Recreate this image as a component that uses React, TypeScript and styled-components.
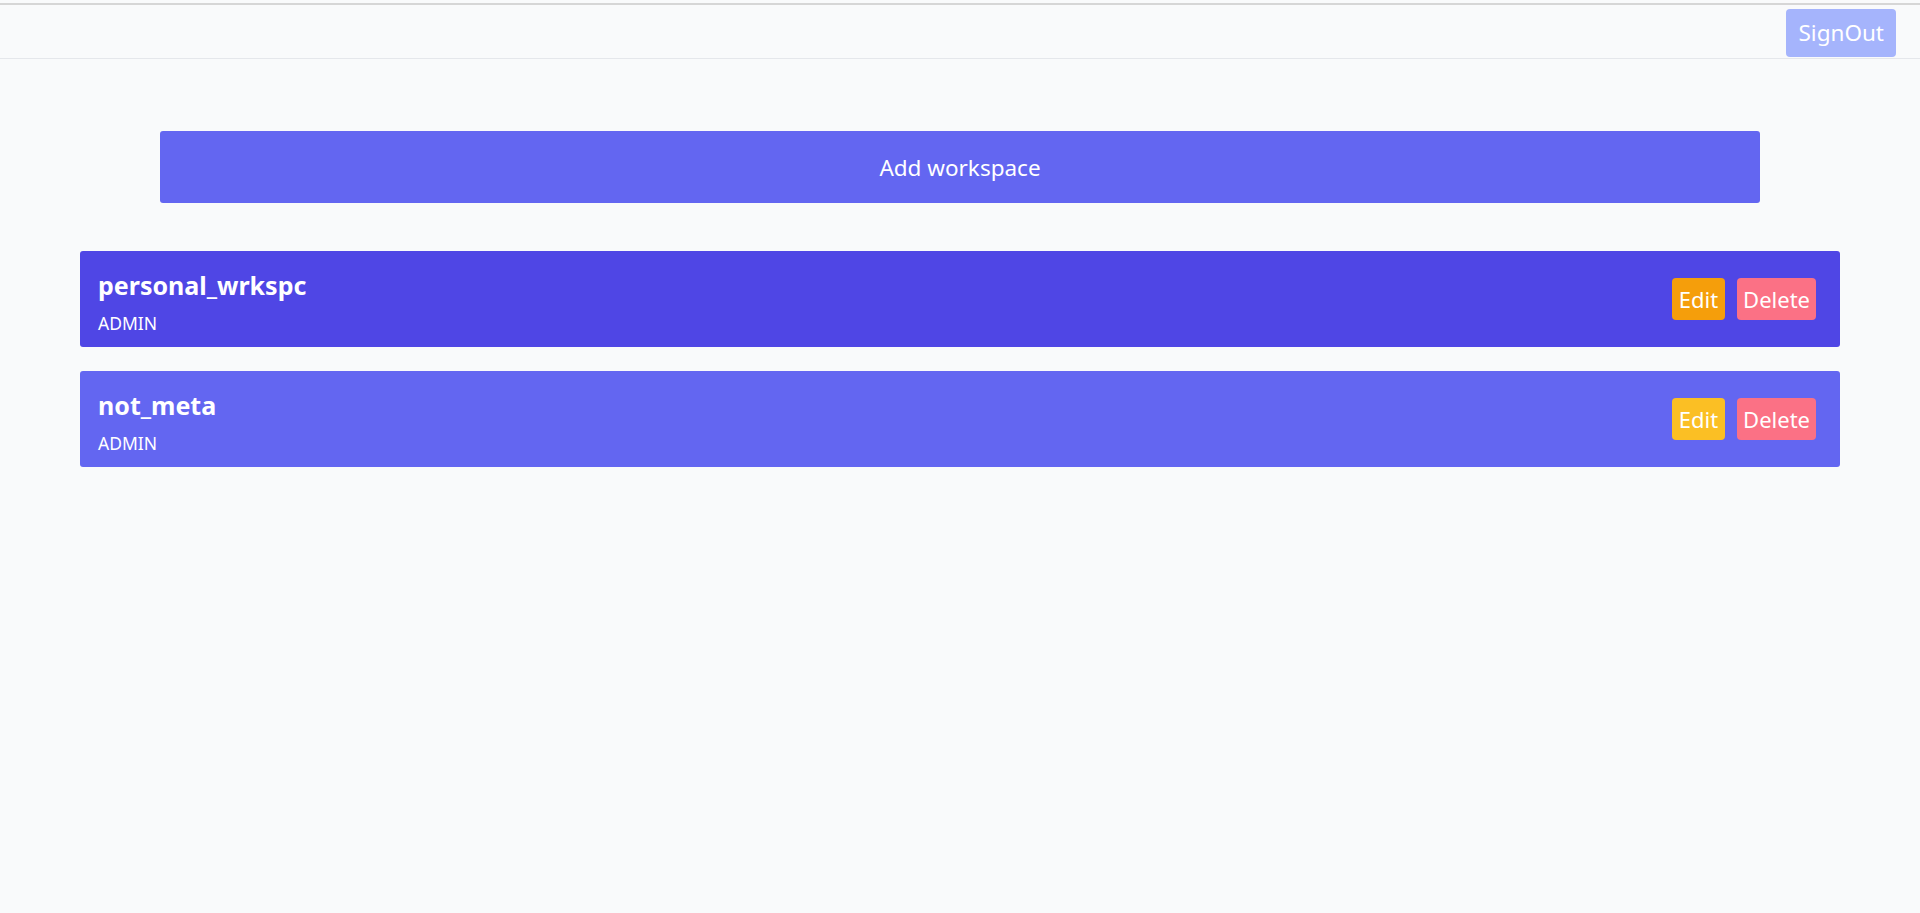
import styled, { createGlobalStyle } from 'styled-components';

interface Workspace {
  name: string;
  role: string;
}

const workspaces: Workspace[] = [
  { name: 'personal_wrkspc', role: 'ADMIN' },
  { name: 'not_meta', role: 'ADMIN' },
];

export default function App() {
  return (
    <>
      <GlobalStyle />
      <Page>
        <Header>
          <SignOutButton>SignOut</SignOutButton>
        </Header>

        <Main>
          <AddButton>Add workspace</AddButton>

          <WorkspaceList>
            {workspaces.map((ws, i) => (
              <WorkspaceCard key={ws.name} $active={i === 0}>
                <WorkspaceInfo>
                  <WorkspaceName>{ws.name}</WorkspaceName>
                  <WorkspaceRole>{ws.role}</WorkspaceRole>
                </WorkspaceInfo>
                <Actions>
                  <EditButton $active={i === 0}>Edit</EditButton>
                  <DeleteButton>Delete</DeleteButton>
                </Actions>
              </WorkspaceCard>
            ))}
          </WorkspaceList>
        </Main>
      </Page>
    </>
  );
}

const GlobalStyle = createGlobalStyle`
  html, body {
    margin: 0;
    padding: 0;
    background: #f9fafb;
    font-family: 'Noto Sans', 'Open Sans', sans-serif;
  }
  * {
    box-sizing: border-box;
  }
`;

const Page = styled.div`
  min-height: 913px;
  padding-top: 3px;
  background: #f9fafb;
`;

const Header = styled.header`
  display: flex;
  justify-content: flex-end;
  align-items: center;
  height: 56px;
  padding: 3px 24px 1px;
  border-top: 2px solid #d6d6d6;
  border-bottom: 1px solid #e5e7eb;
`;

const BaseButton = styled.button`
  border: none;
  color: #fff;
  font-family: inherit;
  cursor: pointer;
  border-radius: 4px;
`;

const SignOutButton = styled(BaseButton)`
  height: 48px;
  padding: 0 12px;
  font-size: 22.5px;
  background: #a5b4fc;
`;

const Main = styled.main`
  display: flex;
  flex-direction: column;
  padding: 72px 80px;
`;

const AddButton = styled(BaseButton)`
  margin: 0 80px;
  height: 72px;
  font-size: 22.5px;
  background: #6366f1;
  border-radius: 3px;
`;

const WorkspaceList = styled.div`
  display: flex;
  flex-direction: column;
  gap: 24px;
  margin-top: 48px;
`;

const WorkspaceCard = styled.div<{ $active: boolean }>`
  display: flex;
  align-items: flex-start;
  justify-content: space-between;
  height: 96px;
  padding: 18px 24px 0 18px;
  border-radius: 3px;
  background: ${({ $active }) => ($active ? '#4f46e5' : '#6366f1')};
  color: #fff;
`;

const WorkspaceInfo = styled.div`
  display: flex;
  flex-direction: column;
  gap: 10px;
`;

const WorkspaceName = styled.div`
  font-size: 25px;
  font-weight: 700;
  line-height: 32px;
`;

const WorkspaceRole = styled.div`
  font-size: 17.5px;
  line-height: 24px;
`;

const Actions = styled.div`
  display: flex;
  gap: 12px;
  margin-top: 9px;
`;

const EditButton = styled(BaseButton)<{ $active: boolean }>`
  height: 42px;
  padding: 0 7px;
  font-size: 22px;
  background: ${({ $active }) => ($active ? '#f59e0b' : '#fbbf24')};
`;

const DeleteButton = styled(BaseButton)`
  height: 42px;
  padding: 0 6px;
  font-size: 22px;
  background: #fb7185;
`;
